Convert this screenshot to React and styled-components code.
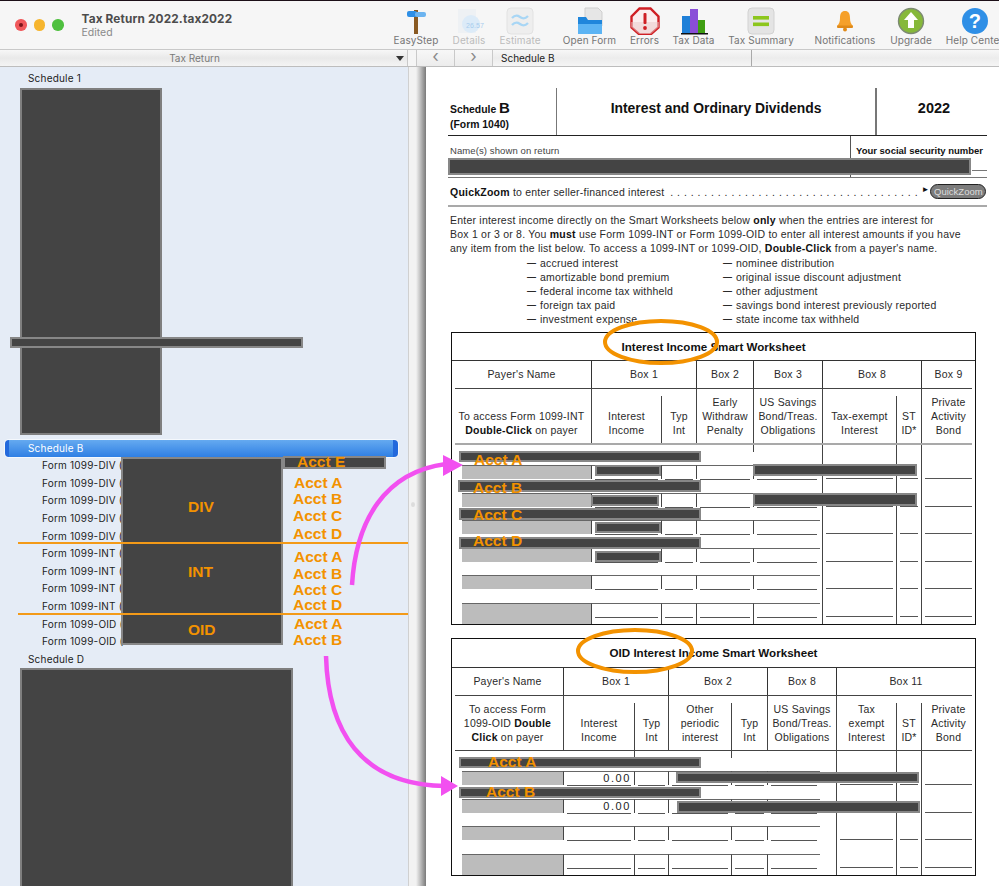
import React from 'react';
import styled, { createGlobalStyle } from 'styled-components';

const GlobalStyle = createGlobalStyle`
  html, body {
    margin: 0;
    padding: 0;
    background: #ffffff;
  }
`;

const Window = styled.div`
  position: relative;
  display: flex;
  flex-direction: column;
  width: 999px;
  height: 886px;
  overflow: hidden;
  border-top: 1px solid #1c0f18;
  box-sizing: border-box;
  font-family: Inter, 'Liberation Sans', sans-serif;
`;

const TitleBar = styled.div`
  display: flex;
  flex: none;
  height: 48px;
  background: #f6f6f6;
`;

const TitleArea = styled.div`
  display: flex;
  flex: none;
  width: 394px;
  padding: 11px 0 0 15px;
  box-sizing: border-box;
`;

const Lights = styled.div`
  display: flex;
  gap: 7px;
  margin: 7px 18px 0 0;
`;

const Light = styled.span`
  display: flex;
  align-items: center;
  justify-content: center;
  width: 11.5px;
  height: 11.5px;
  border-radius: 50%;
  background: ${(p) => p.$color};

  i {
    width: 4px;
    height: 4px;
    border-radius: 50%;
    background: #7c1418;
  }
`;

const DocName = styled.div`
  font-size: 11.8px;
  font-weight: 700;
  line-height: 14px;
  color: #4c4c4c;
  letter-spacing: 0.15px;
  white-space: nowrap;

  span {
    display: block;
    font-size: 10.5px;
    font-weight: 400;
    line-height: 13px;
    color: #8a8a8a;
    letter-spacing: 0;
  }
`;

const Tools = styled.div`
  display: flex;
  flex: none;
  gap: 23px;
`;

const ToolGroup = styled.div`
  display: flex;
  gap: 14.5px;
  margin-left: ${(p) => p.$pull || 0}px;
`;

const Tool = styled.div`
  display: flex;
  flex-direction: column;
  align-items: center;
  width: ${(p) => p.$w}px;
  padding-top: 6px;
  font-size: 10px;
  line-height: 13px;
  letter-spacing: 0.1px;
  color: ${(p) => (p.$off ? '#bcbcbc' : '#757575')};
  white-space: nowrap;

  svg {
    flex: none;
    margin-bottom: -1px;
  }
`;

const HeadBar = styled.div`
  display: flex;
  flex: none;
  height: 18px;
  box-sizing: border-box;
  border-top: 1px solid #c9c9c9;
  border-bottom: 1px solid #bdbdbd;
  background: #f5f5f5;
  font-size: 10px;
  line-height: 16px;
`;

const PaneTitle = styled.div`
  position: relative;
  flex: none;
  width: 408px;
  padding-right: 18px;
  box-sizing: border-box;
  border-right: 1px solid #c9c9c9;
  background: linear-gradient(#f7f7f7, #e9e9e9 50%, #f4f4f4);
  color: #7a7a7a;
  text-align: center;

  &::after {
    content: '';
    position: absolute;
    right: 3px;
    top: 6px;
    border-left: 4px solid transparent;
    border-right: 4px solid transparent;
    border-top: 5px solid #333;
  }
`;

const NavGap = styled.div`
  flex: none;
  width: 8px;
`;

const NavButton = styled.div`
  flex: none;
  width: 37px;
  border-left: 1px solid #c9c9c9;
  background: linear-gradient(#f7f7f7, #ececec);
  color: #8a8a8a;
  font-size: 17px;
  line-height: 13px;
  text-align: center;
`;

const FormTab = styled.div`
  flex: none;
  width: 250px;
  padding-left: 8px;
  border-left: 1px solid #c9c9c9;
  border-right: 1px solid #a9a9a9;
  background: linear-gradient(#f7f7f7, #ececec 50%, #f5f5f5);
  color: #222;
`;

const TabFill = styled.div`
  flex: 1;
  background: linear-gradient(#f7f7f7, #ececec 50%, #f5f5f5);
`;

const Body = styled.div`
  display: flex;
  flex: 1;
  min-height: 0;
`;

const Sidebar = styled.div`
  flex: none;
  width: 408px;
  padding-top: 3px;
  box-sizing: border-box;
  background: #e5ecf6;
  overflow: hidden;
  font-size: 10px;
  letter-spacing: 0.2px;
`;

const TreeRow = styled.div`
  height: 17.6px;
  margin: ${(p) => (p.$selected ? '0 10px 0 5px' : '0')};
  padding-left: ${(p) => (p.$selected ? 23 : p.$child ? 42 : 28)}px;
  box-sizing: border-box;
  line-height: 17.6px;
  color: ${(p) => (p.$selected ? '#ffffff' : '#1c1c1c')};
  border-radius: 4px;
  white-space: nowrap;
  ${(p) =>
    p.$selected &&
    `background: linear-gradient(90deg, #2369dc 4px, transparent 4px, transparent calc(100% - 5px), #2369dc calc(100% - 5px)), linear-gradient(#65aaf0, #2f7fe4);
     box-shadow: 0 0 0 1px #f4f8fd;`}
`;

const SidebarBlock = styled.div`
  width: ${(p) => p.$w}px;
  height: ${(p) => p.$h}px;
  margin: 0 0 5px 20px;
  box-sizing: border-box;
  background: #444444;
  border: 2px solid #7f7f7f;
`;

const Divider = styled.div`
  position: relative;
  flex: none;
  width: 8px;
  background: #f2f2f2;
  border-left: 1px solid #d0d0d0;
  box-sizing: border-box;

  &::after {
    content: '';
    position: absolute;
    left: 2px;
    top: 435px;
    width: 4px;
    height: 5px;
    border-radius: 50%;
    background: #dcdcdc;
  }
`;

const Page = styled.div`
  flex: 1;
  display: flex;
  min-width: 0;
  background: #ffffff;
`;

const Gutter = styled.div`
  flex: none;
  width: 10px;
  background: linear-gradient(90deg, #f2f2f2, #bdbdbd 45%, #7a7a7a);
`;

const Sheet = styled.div`
  flex: 1;
  min-width: 0;
  padding: 21px 12px 0 22px;
  font-family: 'Liberation Sans', Arial, sans-serif;
  color: #2a2a2a;
  font-size: 10.5px;
  letter-spacing: 0.22px;
`;

const FormHead = styled.div`
  display: grid;
  grid-template-columns: 108px 320px 1fr;
  height: 47px;
  border-bottom: 1px solid #222;
`;

const ScheduleName = styled.div`
  padding: 12px 0 0 2px;
  font-size: 10.4px;
  font-weight: 700;
  line-height: 15px;
  color: #111;
  letter-spacing: 0;

  b {
    font-size: 15px;
  }

  span {
    display: block;
  }
`;

const FormTitle = styled.div`
  padding: 12px 0 0 ${(p) => (p.$last ? 4 : 0)}px;
  border-left: 1px solid #777;
  border-right: ${(p) => (p.$last ? 'none' : '1px solid #777')};
  font-size: ${(p) => (p.$last ? 14.5 : 13.9)}px;
  font-weight: 700;
  line-height: 16px;
  color: #111;
  letter-spacing: 0;
  text-align: center;
`;

const NameRow = styled.div`
  display: grid;
  grid-template-columns: 402px 1fr;
  height: 41px;
  border-bottom: 1px solid #777;
  font-size: 9.5px;
`;

const NameCell = styled.div`
  padding: 8px 0 0 2px;
  line-height: 13px;
  color: #444;
  letter-spacing: 0.1px;
`;

const SsnCell = styled.div`
  padding: 8px 0 0 5px;
  border-left: 1px solid #555;
  font-weight: 700;
  line-height: 13px;
  color: #111;
  letter-spacing: 0;
  white-space: nowrap;
`;

const SsnField = styled.div`
  height: 13px;
  margin-left: 116px;
  border-bottom: 1px solid #777;
`;

const ZoomRow = styled.div`
  display: flex;
  align-items: center;
  height: 27px;
  padding: 0 2px;
  border-bottom: 2px solid #a9a9a9;
  white-space: nowrap;

  b {
    color: #111;
  }
`;

const Leader = styled.span`
  flex: none;
  margin: 0 auto 0 6px;
  letter-spacing: 3.87px;
`;

const ZoomButton = styled.span`
  flex: none;
  width: 56px;
  height: 15px;
  margin-left: 1px;
  box-sizing: border-box;
  border: 1px solid #222;
  border-radius: 8px;
  background: #7c7c7c;
  color: #dcdcdc;
  font-size: 9.5px;
  line-height: 13px;
  letter-spacing: 0;
  text-align: center;
`;

const ZoomArrow = styled.span`
  flex: none;
  margin-top: -4px;
  font-size: 8px;
  color: #111;
  letter-spacing: 0;
`;

const Intro = styled.p`
  margin: 0;
  padding: 6px 0 0 2px;
  line-height: 14px;
  white-space: nowrap;

  b {
    color: #111;
  }
`;

const ItemList = styled.div`
  display: grid;
  grid-template-columns: 196px 1fr;
  padding: 1px 0 0 79px;
  line-height: 14px;
`;

const Item = styled.div`
  display: flex;
  gap: 4px;
  white-space: nowrap;

  span {
    flex: none;
    font-size: 9px;
    font-weight: 700;
    letter-spacing: 0;
  }
`;

const Worksheet = styled.div`
  display: grid;
  grid-template-columns: ${(p) => p.$cols};
  width: 525px;
  margin: ${(p) => p.$top}px 0 0 3px;
  box-sizing: border-box;
  border: 1px solid #111;
  overflow: hidden;
`;

const SheetTitle = styled.div`
  grid-column: 1 / -1;
  height: ${(p) => p.$h}px;
  border-bottom: 1px solid #333;
  font-size: 11.6px;
  font-weight: 700;
  line-height: ${(p) => p.$h}px;
  color: #111;
  letter-spacing: 0;
  text-align: center;
`;

const BoxCell = styled.div`
  grid-column: span ${(p) => p.$span || 1};
  height: 27px;
  border-left: ${(p) => (p.$first ? 'none' : '1px solid #333')};
  line-height: 27px;
  text-align: center;
`;

const Rule = styled.div`
  grid-column: 1 / -1;
  height: ${(p) => (p.$heavy ? 2 : 1)}px;
  margin: 0 3px;
  background: ${(p) => (p.$heavy ? '#a9a9a9' : '#444')};
`;

const HeadCell = styled.div`
  display: flex;
  flex-direction: column;
  justify-content: flex-end;
  height: ${(p) => (p.$short ? 47 : 54)}px;
  margin-top: ${(p) => (p.$short ? 7 : 0)}px;
  padding-bottom: 6px;
  box-sizing: border-box;
  border-left: ${(p) => (p.$first ? 'none' : '1px solid #444')};
  line-height: 14px;
  text-align: center;
  white-space: nowrap;

  b {
    color: #111;
  }
`;

const Slot = styled.div`
  display: flex;
  flex-direction: column;
  justify-content: flex-end;
  height: ${(p) => p.$h}px;
  box-sizing: border-box;
  border-left: ${(p) => (p.$rail ? '1px solid #444' : 'none')};

  ${(p) =>
    p.$stub &&
    `&::before {
      content: '';
      width: 1px;
      height: 7px;
      margin-bottom: auto;
      background: #444;
    }`}
`;

const Entry = styled.div`
  display: flex;
  align-items: flex-start;
  height: ${(p) => (p.$tall ? 21 : 14)}px;
  margin-left: ${(p) => (p.$shade ? 10 : 0)}px;
  margin-right: ${(p) => p.$trim || 0}px;
  box-sizing: border-box;
  border-top: ${(p) => (p.$open ? 'none' : '1px solid #666')};
  border-left: ${(p) => (p.$line ? '1px solid #444' : 'none')};
  background: ${(p) => (p.$shade ? '#bcbcbc' : 'transparent')};
`;

const Field = styled.div`
  flex: 1;
  height: 13px;
  margin: 0 3px;
  border-bottom: 1px solid #555;
  font-size: 11px;
  line-height: 13px;
  letter-spacing: 1.6px;
  color: #222;
  text-align: right;
`;

const Overlay = styled.div`
  position: absolute;
  left: 0;
  top: -1px;
  width: 999px;
  height: 886px;
  pointer-events: none;
`;

const Redaction = styled.div`
  position: absolute;
  left: ${(p) => p.$x}px;
  top: ${(p) => p.$y}px;
  width: ${(p) => p.$w}px;
  height: ${(p) => p.$h}px;
  box-sizing: border-box;
  background: #444444;
  border: 2px solid #878787;
`;

const Note = styled.div`
  position: absolute;
  left: ${(p) => p.$x}px;
  top: ${(p) => p.$y - 9}px;
  font-family: 'Liberation Sans', Arial, sans-serif;
  font-size: 15.5px;
  font-weight: 700;
  line-height: 18px;
  color: #f39200;
  white-space: nowrap;
`;

const Separator = styled.div`
  position: absolute;
  left: 18px;
  top: ${(p) => p.$y}px;
  width: 390px;
  height: 2px;
  background: #f39a18;
`;

const Drawing = styled.svg`
  position: absolute;
  left: 0;
  top: 0;
`;

const icons = {
  easystep: (
    <>
      <rect x="16" y="3" width="4" height="24" fill="#8a5a22" />
      <rect x="9" y="4" width="10" height="6" rx="2" fill="#2e8fe6" />
      <rect x="17" y="5" width="11" height="5" rx="2" fill="#6cb4f0" />
    </>
  ),
  details: (
    <>
      <rect x="7" y="2" width="18" height="24" fill="#eef1f4" />
      <circle cx="20" cy="17" r="9" fill="#dcebf8" />
      <text x="15" y="21" fontSize="7" fontFamily="Liberation Sans" fill="#a8cdee">
        26.57
      </text>
    </>
  ),
  estimate: (
    <>
      <rect x="5" y="1" width="26" height="26" rx="4" fill="#eeeeee" stroke="#e2e2e2" />
      <path d="M10 11c3-3 5-3 8-1s5 2 8-1M10 18c3-3 5-3 8-1s5 2 8-1" fill="none" stroke="#a8d6f5" strokeWidth="2.4" />
    </>
  ),
  open: (
    <>
      <path d="M13 1h13l4 4v14H13z" fill="#e6e6e6" stroke="#cfcfcf" />
      <path d="M6 10h8l2 3h14v14H6z" fill="#1f86dc" />
      <path d="M6 17h24v10H6z" fill="#5cb4f4" />
    </>
  ),
  errors: (
    <>
      <path d="M12.5 1.5h11l8 8v11l-8 7h-11l-8-7v-11z" fill="#fbeeee" stroke="#cf1f24" strokeWidth="2.4" />
      <path d="M4 15h28v5l-8 7H12l-8-7z" fill="#e9c7c7" opacity="0.5" />
      <rect x="16.5" y="6" width="3" height="11" rx="1" fill="#cf1f24" />
      <circle cx="18" cy="21" r="1.9" fill="#cf1f24" />
    </>
  ),
  data: (
    <>
      <rect x="6" y="9" width="8" height="17" fill="#1f80d8" />
      <rect x="14" y="2" width="8" height="24" fill="#8a4ed8" />
      <rect x="22" y="13" width="7" height="13" fill="#3f9e12" />
      <rect x="5" y="26" width="27" height="1.5" fill="#111" />
    </>
  ),
  summary: (
    <>
      <rect x="5" y="1" width="26" height="26" rx="4" fill="#e4e4e4" stroke="#d2d2d2" />
      <rect x="10" y="9" width="16" height="3.6" fill="#8cc61c" />
      <rect x="10" y="15.5" width="16" height="3.6" fill="#8cc61c" />
    </>
  ),
  bell: (
    <>
      <path d="M18 4c-3.400 0-5 2.500-5 7 0 4-1 6-3 8h16c-2-2-3-4-3-8 0-4.500-1.600-7-5-7z" fill="#f5a02a" />
      <rect x="10" y="18.500" width="16" height="2.500" rx="1" fill="#e08a18" />
      <circle cx="18" cy="22.500" r="2" fill="#e08a18" />
    </>
  ),
  upgrade: (
    <>
      <circle cx="18" cy="14" r="12.500" fill="#86b83a" stroke="#7c8a72" strokeWidth="1.400" />
      <path d="M18 5l7 8h-4v8h-6v-8h-4z" fill="#ffffff" />
    </>
  ),
  help: (
    <>
      <circle cx="18" cy="14" r="13" fill="#2f8fe6" />
      <text x="18" y="21" fontSize="20" fontWeight="700" fontFamily="Liberation Sans" fill="#ffffff" textAnchor="middle">
        ?
      </text>
    </>
  ),
};

const toolGroups = [
  [
    { label: 'EasyStep', w: 44, icon: 'easystep' },
    { label: 'Details', w: 33, icon: 'details', off: true },
    { label: 'Estimate', w: 40, icon: 'estimate', off: true },
  ],
  [
    { label: 'Open Form', w: 53, icon: 'open' },
    { label: 'Errors', w: 28, icon: 'errors' },
    { label: 'Tax Data', w: 41, icon: 'data' },
    { label: 'Tax Summary', w: 65, icon: 'summary' },
  ],
  [
    { label: 'Notifications', w: 61, icon: 'bell' },
    { label: 'Upgrade', w: 42, icon: 'upgrade' },
    { label: 'Help Center', w: 56, icon: 'help' },
  ],
];

const forms = [
  'DIV', 'DIV', 'DIV', 'DIV', 'DIV',
  'INT', 'INT', 'INT', 'INT',
  'OID', 'OID',
];

const itemsLeft = [
  'accrued interest',
  'amortizable bond premium',
  'federal income tax withheld',
  'foreign tax paid',
  'investment expense',
];

const itemsRight = [
  'nominee distribution',
  'original issue discount adjustment',
  'other adjustment',
  'savings bond interest previously reported',
  'state income tax withheld',
];

// kind: name = shaded payer box, part = only the lower half has its rules, rail = line runs the whole row
const intColumns = [
  { kind: 'name' },
  { kind: 'part', line: true },
  { kind: 'part', line: true },
  { kind: 'part', line: true },
  { kind: 'part', line: true, trim: 2, stub: true },
  { kind: 'rail' },
  { kind: 'rail' },
  { kind: 'rail' },
];

const oidColumns = [
  { kind: 'name' },
  { kind: 'part', line: true, value: true },
  { kind: 'part', line: true, stub: true },
  { kind: 'part', line: true },
  { kind: 'part', line: true, stub: true },
  { kind: 'part', line: true, trim: 16 },
  { kind: 'rail' },
  { kind: 'rail' },
  { kind: 'rail' },
];

const DataRow = ({ columns, height, tall, value, first }) => (
  <>
    {columns.map((col, i) => {
      const rail = col.kind === 'rail';
      return (
        <Slot key={i} $h={height} $rail={rail} $stub={first && col.stub}>
          <Entry
            $shade={col.kind === 'name'}
            $line={col.line}
            $open={rail}
            $tall={tall}
            $trim={col.trim}
          >
            {col.kind !== 'name' && <Field>{col.value ? value : ''}</Field>}
          </Entry>
        </Slot>
      );
    })}
  </>
);

const redactions = [
  { x: 10, y: 337, w: 293, h: 11 },
  { x: 121, y: 457, w: 162, h: 188 },
  { x: 283, y: 456, w: 103, h: 13 },
  { x: 448, y: 158, w: 523, h: 17 },
  { x: 459, y: 451, w: 242, h: 11 },
  { x: 595, y: 465, w: 66, h: 11 },
  { x: 753, y: 464, w: 164, h: 12 },
  { x: 458, y: 480, w: 243, h: 12 },
  { x: 591, y: 495, w: 68, h: 11 },
  { x: 753, y: 493, w: 164, h: 13 },
  { x: 459, y: 508, w: 242, h: 12 },
  { x: 595, y: 522, w: 66, h: 11 },
  { x: 459, y: 537, w: 242, h: 12 },
  { x: 595, y: 551, w: 66, h: 11 },
  { x: 459, y: 757, w: 242, h: 11 },
  { x: 676, y: 772, w: 243, h: 11 },
  { x: 459, y: 787, w: 242, h: 11 },
  { x: 677, y: 801, w: 243, h: 12 },
];

const notes = [
  { x: 297, y: 462, text: 'Acct E' },
  { x: 294, y: 483, text: 'Acct A' },
  { x: 293, y: 499, text: 'Acct B' },
  { x: 293, y: 516, text: 'Acct C' },
  { x: 293, y: 534, text: 'Acct D' },
  { x: 294, y: 557, text: 'Acct A' },
  { x: 293, y: 574, text: 'Acct B' },
  { x: 293, y: 590, text: 'Acct C' },
  { x: 293, y: 605, text: 'Acct D' },
  { x: 294, y: 624, text: 'Acct A' },
  { x: 293, y: 640, text: 'Acct B' },
  { x: 188, y: 507, text: 'DIV' },
  { x: 188, y: 572, text: 'INT' },
  { x: 188, y: 630, text: 'OID' },
  { x: 474, y: 460, text: 'Acct A' },
  { x: 473, y: 488, text: 'Acct B' },
  { x: 473, y: 515, text: 'Acct C' },
  { x: 473, y: 541, text: 'Acct D' },
  { x: 488, y: 762, text: 'Acct A' },
  { x: 486, y: 792, text: 'Acct B' },
];

const App = () => (
  <>
    <GlobalStyle />
    <Window>
      <TitleBar>
        <TitleArea>
          <Lights>
            <Light $color="#f0585a">
              <i />
            </Light>
            <Light $color="#f6b52e" />
            <Light $color="#4fc03f" />
          </Lights>
          <DocName>
            Tax Return 2022.tax2022
            <span>Edited</span>
          </DocName>
        </TitleArea>
        <Tools>
          {toolGroups.map((group, g) => (
            <ToolGroup key={g} $pull={g === 2 ? -2 : 0}>
              {group.map((tool) => (
                <Tool key={tool.label} $w={tool.w} $off={tool.off}>
                  <svg width="36" height="28" viewBox="0 0 36 28">
                    {icons[tool.icon]}
                  </svg>
                  {tool.label}
                </Tool>
              ))}
            </ToolGroup>
          ))}
        </Tools>
      </TitleBar>

      <HeadBar>
        <PaneTitle>Tax Return</PaneTitle>
        <NavGap />
        <NavButton>‹</NavButton>
        <NavButton>›</NavButton>
        <FormTab>Schedule B</FormTab>
        <TabFill />
      </HeadBar>

      <Body>
        <Sidebar>
          <TreeRow>Schedule 1</TreeRow>
          <SidebarBlock $w={142} $h={347} />
          <TreeRow $selected>Schedule B</TreeRow>
          {forms.map((kind, i) => (
            <TreeRow key={i} $child>
              Form 1099-{kind} (
            </TreeRow>
          ))}
          <TreeRow>Schedule D</TreeRow>
          <SidebarBlock $w={273} $h={240} />
        </Sidebar>
        <Divider />
        <Page>
          <Gutter />
          <Sheet>
            <FormHead>
              <ScheduleName>
                Schedule <b>B</b>
                <span>(Form 1040)</span>
              </ScheduleName>
              <FormTitle>Interest and Ordinary Dividends</FormTitle>
              <FormTitle $last>2022</FormTitle>
            </FormHead>
            <NameRow>
              <NameCell>Name(s) shown on return</NameCell>
              <SsnCell>
                Your social security number
                <SsnField />
              </SsnCell>
            </NameRow>
            <ZoomRow>
              <span>
                <b>QuickZoom</b> to enter seller-financed interest
              </span>
              <Leader>.....................................</Leader>
              <ZoomArrow>►</ZoomArrow>
              <ZoomButton>QuickZoom</ZoomButton>
            </ZoomRow>
            <Intro>
              Enter interest income directly on the Smart Worksheets below <b>only</b> when the entries are interest for
              <br />
              Box 1 or 3 or 8. You <b>must</b> use Form 1099-INT or Form 1099-OID to enter all interest amounts if you have
              <br />
              any item from the list below. To access a 1099-INT or 1099-OID, <b>Double-Click</b> from a payer's name.
            </Intro>
            <ItemList>
              {itemsLeft.map((left, i) => (
                <React.Fragment key={left}>
                  <Item>
                    <span>—</span>
                    {left}
                  </Item>
                  <Item>
                    <span>—</span>
                    {itemsRight[i]}
                  </Item>
                </React.Fragment>
              ))}
            </ItemList>

            <Worksheet $top={6} $cols="139px 70px 35px 57px 69px 74px 25px 1fr">
              <SheetTitle $h={27}>Interest Income Smart Worksheet</SheetTitle>
              <BoxCell $first>Payer's Name</BoxCell>
              <BoxCell $span={2}>Box 1</BoxCell>
              <BoxCell>Box 2</BoxCell>
              <BoxCell>Box 3</BoxCell>
              <BoxCell $span={2}>Box 8</BoxCell>
              <BoxCell>Box 9</BoxCell>
              <Rule />
              <HeadCell $first>
                <span>To access Form 1099-INT</span>
                <span>
                  <b>Double-Click</b> on payer
                </span>
              </HeadCell>
              <HeadCell>
                <span>Interest</span>
                <span>Income</span>
              </HeadCell>
              <HeadCell $short>
                <span>Typ</span>
                <span>Int</span>
              </HeadCell>
              <HeadCell>
                <span>Early</span>
                <span>Withdraw</span>
                <span>Penalty</span>
              </HeadCell>
              <HeadCell>
                <span>US Savings</span>
                <span>Bond/Treas.</span>
                <span>Obligations</span>
              </HeadCell>
              <HeadCell>
                <span>Tax-exempt</span>
                <span>Interest</span>
              </HeadCell>
              <HeadCell $short>
                <span>ST</span>
                <span>ID*</span>
              </HeadCell>
              <HeadCell>
                <span>Private</span>
                <span>Activity</span>
                <span>Bond</span>
              </HeadCell>
              <Rule $heavy />
              <DataRow columns={intColumns} height={34} first />
              <DataRow columns={intColumns} height={27.6} />
              <DataRow columns={intColumns} height={27.6} />
              <DataRow columns={intColumns} height={27.6} />
              <DataRow columns={intColumns} height={27.6} />
              <DataRow columns={intColumns} height={34.8} tall />
            </Worksheet>

            <Worksheet $top={13} $cols="111px 71px 34px 63px 36px 69px 60px 25px 1fr">
              <SheetTitle $h={28}>OID Interest Income Smart Worksheet</SheetTitle>
              <BoxCell $first>Payer's Name</BoxCell>
              <BoxCell $span={2}>Box 1</BoxCell>
              <BoxCell $span={2}>Box 2</BoxCell>
              <BoxCell>Box 8</BoxCell>
              <BoxCell $span={3}>Box 11</BoxCell>
              <Rule />
              <HeadCell $first>
                <span>To access Form</span>
                <span>
                  1099-OID <b>Double</b>
                </span>
                <span>
                  <b>Click</b> on payer
                </span>
              </HeadCell>
              <HeadCell>
                <span>Interest</span>
                <span>Income</span>
              </HeadCell>
              <HeadCell $short>
                <span>Typ</span>
                <span>Int</span>
              </HeadCell>
              <HeadCell>
                <span>Other</span>
                <span>periodic</span>
                <span>interest</span>
              </HeadCell>
              <HeadCell $short>
                <span>Typ</span>
                <span>Int</span>
              </HeadCell>
              <HeadCell>
                <span>US Savings</span>
                <span>Bond/Treas.</span>
                <span>Obligations</span>
              </HeadCell>
              <HeadCell>
                <span>Tax</span>
                <span>exempt</span>
                <span>Interest</span>
              </HeadCell>
              <HeadCell $short>
                <span>ST</span>
                <span>ID*</span>
              </HeadCell>
              <HeadCell $short>
                <span>Private</span>
                <span>Activity</span>
                <span>Bond</span>
              </HeadCell>
              <Rule />
              <DataRow columns={oidColumns} height={34} value="0.00" first />
              <DataRow columns={oidColumns} height={27.6} value="0.00" />
              <DataRow columns={oidColumns} height={27.6} />
              <DataRow columns={oidColumns} height={35} tall />
            </Worksheet>
          </Sheet>
        </Page>
      </Body>

      <Overlay>
        {redactions.map((r, i) => (
          <Redaction key={i} $x={r.x} $y={r.y} $w={r.w} $h={r.h} />
        ))}
        <Separator $y={542} />
        <Separator $y={613} />
        <Drawing width="999" height="886" viewBox="0 0 999 886" fill="none">
          <ellipse cx="661" cy="342" rx="56" ry="21" stroke="#f39200" strokeWidth="4" />
          <ellipse cx="635" cy="651" rx="57" ry="21" stroke="#f39200" strokeWidth="4" />
          <path d="M352 585C356 520 385 472 446 464" stroke="#f250f0" strokeWidth="4.5" />
          <path d="M443 455L463 465L443 476Z" fill="#f250f0" />
          <path d="M326 656C328 730 360 785 445 786" stroke="#f250f0" strokeWidth="4.5" />
          <path d="M441 776L458 786L441 796Z" fill="#f250f0" />
        </Drawing>
        {notes.map((n, i) => (
          <Note key={i} $x={n.x} $y={n.y}>
            {n.text}
          </Note>
        ))}
      </Overlay>
    </Window>
  </>
);

export default App;
